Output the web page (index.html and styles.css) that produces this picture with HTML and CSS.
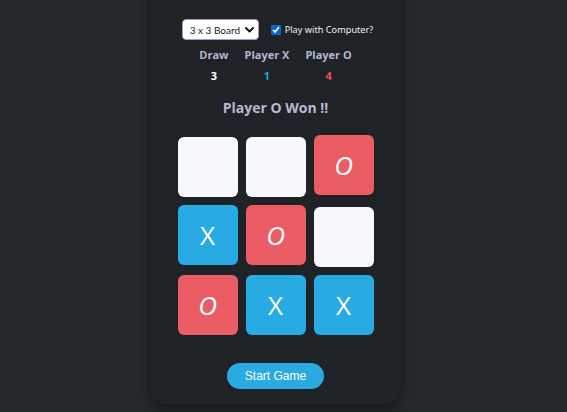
FILE: index.html
```html
<!DOCTYPE html>
<html lang="en">
<head>
<meta charset="utf-8">
<title>Tic Tac Toe</title>
<link rel="stylesheet" href="styles.css">
</head>
<body>
<main class="card">
  <h1 class="title"><span class="logo"></span>Tic Tac Toe Game</h1>
  <div class="controls">
    <div class="select-wrap">
      <select class="board-select">
        <option>3 x 3 Board</option>
        <option>4 x 4 Board</option>
      </select>
      <svg class="chevron" width="9" height="6" viewBox="0 0 9 6"><path d="M1 1 L4.5 4.5 L8 1" fill="none" stroke="#111" stroke-width="1.8" stroke-linecap="round" stroke-linejoin="round"/></svg>
    </div>
    <label class="computer"><input type="checkbox" checked> Play with Computer?</label>
  </div>
  <div class="stats">
    <div class="stat"><span class="stat-label">Draw</span><span class="stat-value draw">3</span></div>
    <div class="stat"><span class="stat-label">Player X</span><span class="stat-value px">1</span></div>
    <div class="stat"><span class="stat-label">Player O</span><span class="stat-value po">4</span></div>
  </div>
  <p class="status">Player O Won !!</p>
  <div class="board">
    <div class="cell empty"></div>
    <div class="cell empty"></div>
    <div class="cell o">O</div>
    <div class="cell x">X</div>
    <div class="cell o">O</div>
    <div class="cell empty"></div>
    <div class="cell o">O</div>
    <div class="cell x">X</div>
    <div class="cell x">X</div>
  </div>
  <button class="start">Start Game</button>
</main>
</body>
</html>
```
FILE: styles.css
```css
html, body {
  margin: 0;
  padding: 0;
}
body {
  background: #25292d;
  font-family: "Open Sans", "Noto Sans", sans-serif;
  height: 412px;
  overflow: hidden;
}
.card {
  box-sizing: border-box;
  width: 251px;
  margin: -34px 0 0 150px;
  background: #1f2226;
  border-radius: 16px;
  box-shadow: 0 4px 14px rgba(0, 0, 0, 0.45);
  padding: 0 0 15px;
  display: flex;
  flex-direction: column;
  align-items: center;
}
.title {
  margin: 0;
  height: 36px;
  font-size: 24px;
  line-height: 30px;
  color: #f1f1f4;
  font-weight: 400;
  font-family: "Liberation Serif", serif;
  display: flex;
  align-items: center;
  gap: 8px;
  white-space: nowrap;
}
.logo {
  width: 16px;
  height: 16px;
  border-radius: 50%;
  border: 3px solid #d9d9df;
  box-sizing: border-box;
}
.controls {
  margin-top: 17px;
  padding-left: 4px;
  display: flex;
  align-items: center;
  gap: 12px;
}
.select-wrap {
  position: relative;
  display: flex;
}
.board-select {
  appearance: none;
  -webkit-appearance: none;
  box-sizing: border-box;
  width: 77px;
  height: 21px;
  font-family: Lato, "Noto Sans", sans-serif;
  font-size: 10px;
  color: #222;
  background: #fff;
  border: 1px solid #9c9cc4;
  border-radius: 4px;
  padding: 0 0 0 7px;
}
.chevron {
  position: absolute;
  right: 5px;
  top: 8px;
  pointer-events: none;
}
.computer {
  display: flex;
  align-items: center;
  gap: 4px;
  font-family: "Noto Sans", sans-serif;
  font-size: 9.2px;
  color: #f0f0f4;
}
.computer input {
  margin: 0;
  width: 10px;
  height: 10px;
  accent-color: #0b63ce;
}
.stats {
  margin-top: 7px;
  display: flex;
  gap: 16px;
}
.stat {
  display: flex;
  flex-direction: column;
  align-items: center;
}
.stat-label {
  font-size: 11px;
  font-weight: 700;
  line-height: 16px;
  color: #b3b8d3;
}
.stat-value {
  margin-top: 5px;
  font-size: 11px;
  font-weight: 700;
  line-height: 16px;
}
.draw { color: #ffffff; }
.px { color: #22a6e3; }
.po { color: #ee4e58; }
.status {
  margin: 14px 0 0;
  font-size: 14px;
  font-weight: 700;
  line-height: 20px;
  color: #b7bbd2;
}
.board {
  margin-top: 17px;
  display: grid;
  grid-template-columns: repeat(3, 60px);
  grid-auto-rows: 60px;
  column-gap: 8px;
  row-gap: 10px;
}
.cell {
  border-radius: 6px;
  display: flex;
  align-items: center;
  justify-content: center;
  font-family: "Open Sans", sans-serif;
  font-size: 26px;
  color: #ffffff;
}
.cell.empty {
  background: #f7f7fe;
  transform: translateY(2px);
}
.cell.x { background: #27abe2; }
.cell.o { background: #eb5c64; font-style: italic; }
.start {
  margin-top: 28px;
  width: 97px;
  height: 26px;
  border: none;
  border-radius: 13px;
  background: #29abe2;
  color: #ffffff;
  font-family: "Liberation Sans", Arial, sans-serif;
  font-size: 12px;
}
```
